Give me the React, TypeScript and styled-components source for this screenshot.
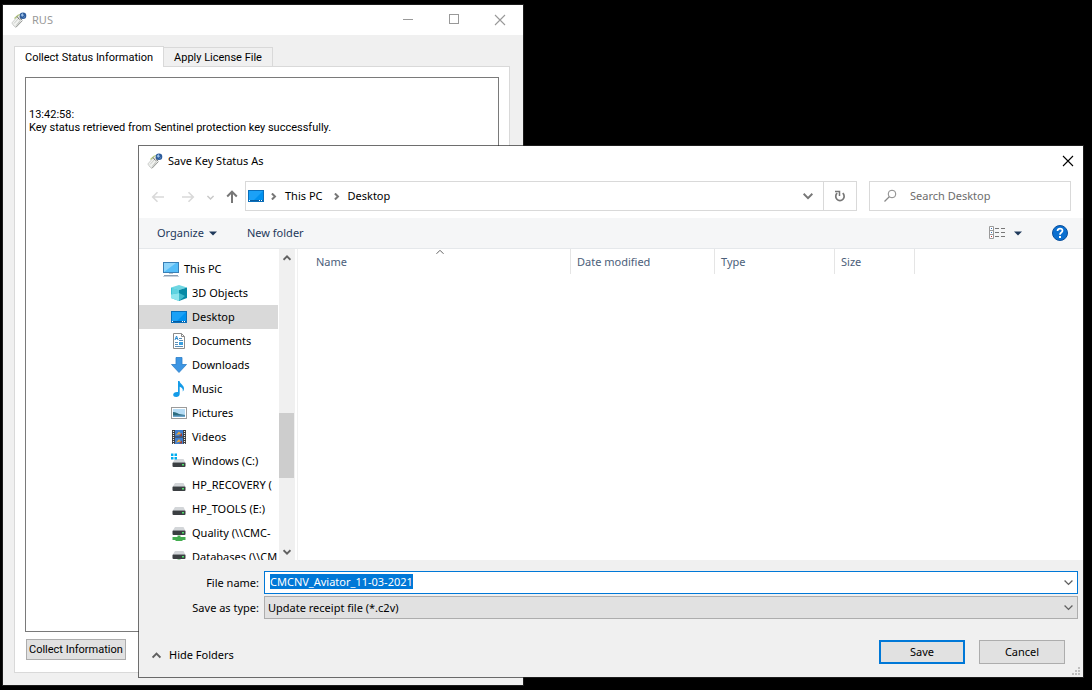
import React, { useEffect, useRef } from "react";
import styled, { createGlobalStyle, css } from "styled-components";

const uiFont = '"Noto Sans", "Open Sans", sans-serif';
const classicFont = 'Roboto, "Liberation Sans", sans-serif';

const GlobalStyle = createGlobalStyle`
  * { box-sizing: border-box; }
  body { margin: 0; background: #000; font-family: ${uiFont}; font-size: 11px; line-height: 16px; color: #000; }
  button, input, select, textarea { font: inherit; color: inherit; margin: 0; border-radius: 0; }
  svg { display: block; flex: none; }
`;

const Desktop = styled.main`
  position: relative;
  min-height: 100vh;
  background: #000;
  overflow: hidden;
`;

const frame = css`
  position: absolute;
  display: flex;
  flex-direction: column;
  border: 1px solid rgba(41, 41, 41, 0.68);
  background-clip: padding-box;
`;

const ToolWindow = styled.section`
  ${frame}
  left: 2px;
  top: 4px;
  bottom: 4px;
  width: 522px;
  background-color: #f0f0f0;
  font-family: ${classicFont};
`;

const DialogWindow = styled.section`
  ${frame}
  left: 138px;
  right: 8px;
  top: 145px;
  bottom: 12px;
  background-color: #fff;
`;

const TitleBar = styled.header<{ $muted?: boolean }>`
  display: flex;
  align-items: center;
  height: 30px;
  flex: none;
  padding: 0 9px 0 8px;
  gap: 5px;
  background: #fff;
  color: ${(p) => (p.$muted ? "#999" : "#000")};
  font-family: ${uiFont};
`;

const Title = styled.h1`
  margin: 0;
  flex: 1;
  font-size: inherit;
  font-weight: 400;
`;

const PlainButton = styled.button`
  display: flex;
  align-items: center;
  gap: 5px;
  padding: 0;
  border: 0;
  background: none;
  white-space: nowrap;
`;

const CaptionButtons = styled.div`
  display: flex;
  gap: 34px;
  padding-right: 8px;
`;

const ToolBody = styled.div`
  flex: 1;
  display: flex;
  flex-direction: column;
  padding: 11px 13px 12px 11px;
`;

const TabStrip = styled.div`
  display: flex;
  align-items: flex-end;
`;

const Tab = styled.button<{ $active?: boolean }>`
  height: ${(p) => (p.$active ? 21 : 19)}px;
  padding: 1px 10px 0;
  border: 1px solid #d9d9d9;
  border-bottom: 0;
  background: ${(p) => (p.$active ? "#fff" : "#f0f0f0")};
  line-height: 18px;
  margin-bottom: ${(p) => (p.$active ? -1 : 0)}px;
  z-index: ${(p) => (p.$active ? 1 : 0)};
  white-space: nowrap;
  & + & { border-left: 0; }
`;

const TabPanel = styled.div`
  flex: 1;
  display: flex;
  flex-direction: column;
  align-items: flex-start;
  gap: 7px;
  padding: 10px 10px 12px;
  border: 1px solid #d9d9d9;
  background: #fff;
`;

const Log = styled.textarea`
  flex: 1;
  width: 100%;
  padding: 4px 3px;
  border: 1px solid #7a7a7a;
  background: #fff;
  resize: none;
  outline: 0;
  line-height: 13px;
`;

const CollectButton = styled.button`
  height: 21px;
  margin-left: 1px;
  padding: 0 2px;
  border: 1px solid #adadad;
  background: #e1e1e1;
  white-space: nowrap;
`;

const NavRow = styled.nav`
  display: flex;
  align-items: center;
  height: 42px;
  flex: none;
  padding: 0 12px;
`;

const NavButtons = styled.div`
  display: grid;
  grid-template-columns: 30px 26px 18px 20px;
  align-items: center;
  flex: none;
`;

const box = css`
  display: flex;
  align-items: center;
  height: 30px;
  margin-top: -2px;
  border: 1px solid #d9d9d9;
  background: #fff;
`;

const AddressBar = styled.div`
  ${box}
  flex: 1;
  padding-left: 2px;
`;

const Crumb = styled.button`
  padding: 0 4px 0 0;
  border: 0;
  background: none;
`;

const CrumbArrow = styled.span`
  display: flex;
  padding-left: 6px;
  width: 21px;
`;

const Spacer = styled.div`
  flex: 1;
`;

const RefreshButton = styled.button`
  display: flex;
  align-items: center;
  justify-content: center;
  width: 33px;
  height: 100%;
  margin-left: 10px;
  border: 0;
  border-left: 1px solid #d9d9d9;
  padding: 0;
  background: none;
`;

const SearchBox = styled.label`
  ${box}
  width: 202px;
  margin-left: 12px;
  padding: 0 13px;
  gap: 12px;
`;

const SearchInput = styled.input`
  flex: 1;
  min-width: 0;
  padding: 0;
  border: 0;
  outline: 0;
  background: none;
  &::placeholder { color: #6d6d6d; opacity: 1; }
`;

const CommandBar = styled.div`
  display: flex;
  align-items: center;
  height: 31px;
  flex: none;
  padding: 0 15px 0 18px;
  gap: 30px;
  border-bottom: 1px solid #e5e8eb;
  background: #f5f6f7;
  color: #1e395b;
`;

const Browser = styled.div`
  display: flex;
  flex: 1;
  min-height: 0;
`;

const Tree = styled.ul`
  width: 139px;
  flex: none;
  margin: 0;
  padding: 8px 0 0;
  list-style: none;
  overflow: hidden;
`;

const TreeItem = styled.li<{ $root?: boolean; $selected?: boolean }>`
  display: flex;
  align-items: center;
  height: 24px;
  gap: 5px;
  padding-left: ${(p) => (p.$root ? 24 : 32)}px;
  background: ${(p) => (p.$selected ? "#d9d9d9" : "none")};
  white-space: nowrap;
`;

const ScrollTrack = styled.div`
  display: flex;
  flex-direction: column;
  align-items: center;
  width: 16px;
  flex: none;
  margin-left: 1px;
  padding: 5px 0 4px;
  background: #f0f0f0;
`;

const ScrollThumb = styled.div`
  width: 100%;
  height: 65px;
  margin-bottom: 70px;
  border-right: 1px solid #f0f0f0;
  background: #cdcdcd;
`;

const FilePane = styled.div`
  position: relative;
  flex: 1;
  margin-left: 2px;
  border-left: 1px solid #f0f0f0;
`;

const FileTable = styled.table`
  border-collapse: separate;
  border-spacing: 0;
  table-layout: fixed;
  width: 616px;
`;

const ColumnHead = styled.th<{ $width: number; $first?: boolean }>`
  width: ${(p) => p.$width}px;
  height: 25px;
  padding: 0 0 0 ${(p) => (p.$first ? 18 : 6)}px;
  border-right: 1px solid #e5e5e5;
  color: #4c607a;
  font-weight: 400;
  text-align: left;
`;

const SortMark = styled.span`
  position: absolute;
  left: 138px;
  top: -1px;
`;

const Footer = styled.footer`
  display: flex;
  flex-direction: column;
  height: 117px;
  flex: none;
  padding: 11px 5px 0 12px;
  background: #f0f0f0;
`;

const Fields = styled.div`
  display: grid;
  grid-template-columns: 108px 1fr;
  column-gap: 5px;
  row-gap: 2px;
  align-items: center;
`;

const FieldLabel = styled.label`
  text-align: right;
  white-space: nowrap;
`;

const Combo = styled.div`
  display: grid;
  align-items: center;
  & > * { grid-area: 1 / 1; }
  & > svg { justify-self: end; margin-right: 5px; pointer-events: none; }
`;

const FileNameInput = styled.input`
  height: 23px;
  width: 100%;
  padding: 0 20px 2px 5px;
  border: 1px solid #0078d7;
  background: #fff;
  outline: 0;
  &::selection { background: #0078d7; color: #fff; }
`;

const TypeSelect = styled.select`
  height: 23px;
  width: 100%;
  padding: 0 20px 0 3px;
  border: 1px solid #adadad;
  background: #e1e1e1;
  appearance: none;
  outline: 0;
`;

const Actions = styled.div`
  display: flex;
  align-items: center;
  gap: 14px;
  margin-top: 21px;
  padding-right: 13px;
`;

const ActionButton = styled.button<{ $primary?: boolean }>`
  width: 86px;
  height: 24px;
  padding: 0;
  border: ${(p) => (p.$primary ? "2px solid #0078d7" : "1px solid #adadad")};
  background: #e1e1e1;
`;

const FoldersToggle = styled(PlainButton)`
  margin-top: 6px;
  padding-left: 1px;
  gap: 8px;
`;

const ResizeGrip = styled.span`
  position: absolute;
  right: 3px;
  bottom: 2px;
`;

const KeyIcon = () => (
  <svg width="16" height="16" viewBox="0 0 16 16">
    <path d="M.800 11 7.500 3.500 11 7 4.800 15.200 3 14Z" fill="#f1f2f0" stroke="#b9bbb8" strokeWidth=".7" />
    <path d="M3 11.500 8 6M5 13.500l5-6" stroke="#c6c9c4" strokeWidth=".9" />
    <path d="M3.500 6.500 7 3.200 10 2.200" stroke="#b3c67c" strokeWidth="1.200" fill="none" />
    <path d="M6 4.500 8.500 7.500M9 5l1.500 3" stroke="#6a6a6a" strokeWidth="1" />
    <path d="M5 15.300 11.500 8.500" stroke="#8c8f8b" strokeWidth=".9" />
    <circle cx="12" cy="3.800" r="3.300" fill="#2d5c9c" />
    <path d="M10 3 11.500 1.500 12.500 3.500 11 4.500ZM12.500 5.500l1.500-1" fill="#9fc3ea" stroke="#9fc3ea" strokeWidth=".5" />
  </svg>
);

const CloseIcon = ({ color }: { color: string }) => (
  <svg width="12" height="12" viewBox="0 0 12 12">
    <path d="M1 1 11 11M11 1 1 11" stroke={color} strokeWidth="1.100" />
  </svg>
);

const Chevron = ({ dir, size = 8, color = "#606060", weight = 2 }: { dir: "up" | "down" | "right"; size?: number; color?: string; weight?: number }) => {
  const turn = { down: 0, up: 180, right: -90 }[dir];
  return (
    <svg width={size} height={size} viewBox="0 0 8 8">
      <path d="M.500 2.200 4 5.700 7.500 2.200" fill="none" stroke={color} strokeWidth={(weight * 8) / size} transform={`rotate(${turn} 4 4)`} />
    </svg>
  );
};

const Arrow = ({ turn = 0, color = "#d9d9d9", weight = 1.6 }: { turn?: number; color?: string; weight?: number }) => (
  <svg width="14" height="14" viewBox="0 0 14 14">
    <path d="M13 7H2M6.500 2.200 1.700 7l4.800 4.800" fill="none" stroke={color} strokeWidth={weight} transform={`rotate(${turn} 7 7)`} />
  </svg>
);

const Caret = () => (
  <svg width="8" height="5" viewBox="0 0 8 5">
    <path d="M0 .500H8L4 4.500Z" fill="#1e395b" />
  </svg>
);

const DesktopIcon = () => (
  <svg width="16" height="16" viewBox="0 0 16 16">
    <rect x=".5" y="2.500" width="15" height="11" fill="#1ba1f7" stroke="#0a6fbb" />
    <path d="M15 3v9L6 12Z" fill="#0091ef" />
    <path d="M1 12.500h14" stroke="#075c9f" />
    <path d="M1 12.500h1M11 12.500h1M13 12.500h1" stroke="#fff" />
  </svg>
);

const ComputerIcon = () => (
  <svg width="16" height="16" viewBox="0 0 16 16">
    <rect x=".5" y="1.500" width="15" height="10" fill="#55bdf8" stroke="#397fb5" />
    <path d="M1 11 13 2H1Z" fill="#8ed5fb" />
    <path d="M6 12h4v1H6Z" fill="#b9c4cd" />
    <path d="M1 14.500h14" stroke="#8d9fb3" />
    <path d="M0 15.500h16" stroke="#c7d0da" />
  </svg>
);

const CubeIcon = () => (
  <svg width="16" height="16" viewBox="0 0 16 16">
    <path d="M8 0 16 2.500 8 5 0 2.500Z" fill="#6fd6e2" />
    <path d="M0 2.500 8 5V16L0 13Z" fill="#38c2d4" />
    <path d="M16 2.500 8 5V16L16 13Z" fill="#078aa5" />
    <path d="M0 9.500 8 8v8L0 13Z" fill="#8de5ed" />
    <path d="M8 8 14 11 8 16Z" fill="#3fb9cb" />
    <path d="M8 5V8L1 9.300V3Z" fill="#5fd3e0" />
  </svg>
);

const DocumentIcon = () => (
  <svg width="16" height="16" viewBox="0 0 16 16">
    <path d="M2.500.500H10.500L13.500 3.500V15.500H2.500Z" fill="#fff" stroke="#8b8b8b" />
    <path d="M10.500.500V3.500H13.500" fill="none" stroke="#8b8b8b" />
    <path d="m4 7 1.500-4L7 7M4.500 5.500h2" stroke="#2b8ad0" fill="none" />
    <path d="M8 5.500h3M8 7.500h4M4 13.500h8M4 9.500h3M4 11.500h3" stroke="#5a8fb8" />
    <rect x="8" y="9" width="4" height="3" fill="#3aa0e0" />
  </svg>
);

const DownloadIcon = () => (
  <svg width="16" height="16" viewBox="0 0 16 16">
    <path d="M5 .500h6v7h4.500L8 15.500.500 7.500H5Z" fill="#3c95e3" stroke="#2b7dc8" strokeWidth=".8" />
  </svg>
);

const MusicIcon = () => (
  <svg width="16" height="16" viewBox="0 0 16 16">
    <path d="M7 0h1.500C9 3 13 4 13 7.500c0 1.500-.7 2.500-1.300 3C12.300 8 11 6.500 8.700 5.700V13c0 1.800-1.700 3-3.500 3S2.200 15 2.200 13.700C2.200 12 4 10.700 7 11Z" fill="#149be8" />
  </svg>
);

const PictureIcon = () => (
  <svg width="16" height="16" viewBox="0 0 16 16">
    <rect x=".5" y="2.500" width="15" height="11" fill="#fff" stroke="#9b9b9b" />
    <rect x="2" y="4" width="12" height="8" fill="#b6dcf5" />
    <path d="M2 7c3 0 4 1 6 2l6 1v2H2Z" fill="#2e6d80" />
    <path d="M2 10.500h12V12H2Z" fill="#6ca5cc" />
  </svg>
);

const VideoIcon = () => (
  <svg width="16" height="16" viewBox="0 0 16 16">
    <rect x="1" y="1" width="14" height="14" fill="#3c3c3c" />
    <rect x="4" y="1" width="8" height="6.500" fill="#3f7fd0" />
    <rect x="4" y="8.500" width="8" height="6.500" fill="#3f7fd0" />
    <path d="M2.500 2v13M13.500 2v13" stroke="#eee" strokeWidth="1.200" strokeDasharray="1 1" />
    <path d="M5 6 8 2.500 10 5ZM5 13.500l3-3.500 2 2.500Z" fill="#e8a63c" />
    <path d="m8 7 3-3v3ZM8 14.500l3-3v3Z" fill="#a63d2c" />
  </svg>
);

const DriveIcon = ({ kind }: { kind?: "system" | "network" }) => {
  const network = kind === "network";
  return (
    <svg width="16" height="16" viewBox="0 0 16 16">
      <g transform={network ? "translate(0 -4)" : undefined}>
        <path d="M4 6h8.500l2 4h-13Z" fill="#d3d6d9" />
        <rect x="1.500" y="9.500" width="13" height="4.500" rx="1" fill="#3b3f42" />
        <path d="M2 9.500h12" stroke="#8e9295" />
        <rect x="11" y="11" width="2" height="1.500" fill="#4ee06a" />
      </g>
      {kind === "system" && <path d="M0 .500h2.500V3H0ZM3.500.500H6V3H3.500ZM0 4h2.500v2.500H0ZM3.500 4H6v2.500H3.500Z" fill="#00adef" />}
      {network && <path d="M6.500 10.500h3V12h5v3h-3v1h-7v-1h-3v-3h5Z" fill="#44ad50" />}
    </svg>
  );
};

const places = [
  { name: "3D Objects", icon: <CubeIcon /> },
  { name: "Desktop", icon: <DesktopIcon />, selected: true },
  { name: "Documents", icon: <DocumentIcon /> },
  { name: "Downloads", icon: <DownloadIcon /> },
  { name: "Music", icon: <MusicIcon /> },
  { name: "Pictures", icon: <PictureIcon /> },
  { name: "Videos", icon: <VideoIcon /> },
  { name: "Windows (C:)", icon: <DriveIcon kind="system" /> },
  { name: "HP_RECOVERY (", icon: <DriveIcon /> },
  { name: "HP_TOOLS (E:)", icon: <DriveIcon /> },
  { name: "Quality (\\\\CMC-", icon: <DriveIcon kind="network" /> },
  { name: "Databases (\\\\CM", icon: <DriveIcon kind="network" /> },
];

const columns = [
  { name: "Name", width: 273 },
  { name: "Date modified", width: 144 },
  { name: "Type", width: 120 },
  { name: "Size", width: 80 },
];

const logText = "\n\n13:42:58:\nKey status retrieved from Sentinel protection key successfully.";

function StatusTool() {
  return (
    <ToolWindow aria-label="RUS">
      <TitleBar $muted>
        <KeyIcon />
        <Title>RUS</Title>
        <CaptionButtons>
          <PlainButton aria-label="Minimize">
            <svg width="12" height="12" viewBox="0 0 12 12"><path d="M1 5.500h10" stroke="#999" /></svg>
          </PlainButton>
          <PlainButton aria-label="Maximize">
            <svg width="12" height="12" viewBox="0 0 12 12"><rect x="1.500" y=".5" width="9" height="9" fill="none" stroke="#999" /></svg>
          </PlainButton>
          <PlainButton aria-label="Close"><CloseIcon color="#999" /></PlainButton>
        </CaptionButtons>
      </TitleBar>
      <ToolBody>
        <TabStrip role="tablist">
          <Tab role="tab" aria-selected $active>Collect Status Information</Tab>
          <Tab role="tab" aria-selected={false}>Apply License File</Tab>
        </TabStrip>
        <TabPanel role="tabpanel">
          <Log aria-label="Status log" readOnly value={logText} />
          <CollectButton>Collect Information</CollectButton>
        </TabPanel>
      </ToolBody>
    </ToolWindow>
  );
}

function SaveDialog() {
  const nameRef = useRef<HTMLInputElement>(null);
  useEffect(() => {
    nameRef.current?.focus();
    nameRef.current?.select();
  }, []);

  return (
    <DialogWindow role="dialog" aria-label="Save Key Status As">
      <TitleBar>
        <KeyIcon />
        <Title>Save Key Status As</Title>
        <PlainButton aria-label="Close"><CloseIcon color="#000" /></PlainButton>
      </TitleBar>
      <NavRow>
        <NavButtons>
          <PlainButton aria-label="Back"><Arrow /></PlainButton>
          <PlainButton aria-label="Forward"><Arrow turn={180} /></PlainButton>
          <PlainButton aria-label="Recent locations"><Chevron dir="down" color="#c8c8c8" weight={1.5} size={7} /></PlainButton>
          <PlainButton aria-label="Up"><Arrow turn={90} color="#777" weight={2} /></PlainButton>
        </NavButtons>
        <AddressBar>
          <DesktopIcon />
          <CrumbArrow><Chevron dir="right" size={7} color="#777" /></CrumbArrow>
          <Crumb>This PC</Crumb>
          <CrumbArrow><Chevron dir="right" size={7} color="#777" /></CrumbArrow>
          <Crumb>Desktop</Crumb>
          <Spacer />
          <PlainButton aria-label="Previous locations"><Chevron dir="down" size={10} color="#777" /></PlainButton>
          <RefreshButton aria-label="Refresh">
            <svg width="12" height="12" viewBox="0 0 12 12">
              <path d="M8.700 3.200A4.200 4.200 0 1 1 3.200 3.200" fill="none" stroke="#777" strokeWidth="1.700" />
              <path d="M1 1.500H5.500V6" fill="none" stroke="#777" strokeWidth="1.500" />
            </svg>
          </RefreshButton>
        </AddressBar>
        <SearchBox>
          <svg width="15" height="14" viewBox="0 0 15 14">
            <circle cx="9" cy="5" r="3.800" fill="none" stroke="#888" />
            <path d="M6.300 7.800 1.500 12.500" stroke="#888" strokeWidth="1.200" />
          </svg>
          <SearchInput aria-label="Search Desktop" placeholder="Search Desktop" />
        </SearchBox>
      </NavRow>
      <CommandBar>
        <PlainButton>Organize <Caret /></PlainButton>
        <PlainButton>New folder</PlainButton>
        <Spacer />
        <PlainButton aria-label="Change view">
          <svg width="20" height="14" viewBox="0 0 20 14">
            <path d="M.500.500h4v12h-4ZM.500 4.500h4M.500 8.500h4" fill="#fff" stroke="#9a9a9a" />
            <path d="M2 2.500h1M2 6.500h1" stroke="#3b76b8" />
            <path d="M2 10.500h1" stroke="#c03030" />
            <path d="M6 2.500h4M12 2.500h4M6 6.500h4M12 6.500h4M6 10.500h4M12 10.500h4" stroke="#777" />
          </svg>
          <Caret />
        </PlainButton>
        <PlainButton aria-label="Help">
          <svg width="16" height="16" viewBox="0 0 16 16">
            <circle cx="8" cy="8" r="7.500" fill="#0a6fd0" stroke="#0a4f9c" />
            <path d="M5.500 6C5.500 2.800 10.500 3 10.500 5.800 10.500 7.600 8 7.500 8 9.700" fill="none" stroke="#fff" strokeWidth="1.700" />
            <path d="M7 11h2v2H7Z" fill="#fff" />
          </svg>
        </PlainButton>
      </CommandBar>
      <Browser>
        <Tree>
          <TreeItem $root><ComputerIcon />This PC</TreeItem>
          {places.map((p) => (
            <TreeItem key={p.name} $selected={p.selected}>{p.icon}{p.name}</TreeItem>
          ))}
        </Tree>
        <ScrollTrack>
          <Chevron dir="up" />
          <Spacer />
          <ScrollThumb />
          <Chevron dir="down" />
        </ScrollTrack>
        <FilePane>
          <SortMark><Chevron dir="up" weight={1} /></SortMark>
          <FileTable>
            <thead>
              <tr>
                {columns.map((c, i) => (
                  <ColumnHead key={c.name} scope="col" $width={c.width} $first={i === 0}>{c.name}</ColumnHead>
                ))}
              </tr>
            </thead>
          </FileTable>
        </FilePane>
      </Browser>
      <Footer>
        <Fields>
          <FieldLabel htmlFor="file-name">File name:</FieldLabel>
          <Combo>
            <FileNameInput id="file-name" ref={nameRef} defaultValue="CMCNV_Aviator_11-03-2021" />
            <Chevron dir="down" weight={1.3} size={9} />
          </Combo>
          <FieldLabel htmlFor="file-type">Save as type:</FieldLabel>
          <Combo>
            <TypeSelect id="file-type"><option>Update receipt file (*.c2v)</option></TypeSelect>
            <Chevron dir="down" weight={1.3} size={9} />
          </Combo>
        </Fields>
        <Actions>
          <FoldersToggle><Chevron dir="up" size={9} />Hide Folders</FoldersToggle>
          <Spacer />
          <ActionButton $primary>Save</ActionButton>
          <ActionButton>Cancel</ActionButton>
        </Actions>
      </Footer>
      <ResizeGrip>
        <svg width="8" height="8" viewBox="0 0 8 8">
          <path d="M6 0h2v2H6ZM3 3h2v2H3ZM6 3h2v2H6ZM0 6h2v2H0ZM3 6h2v2H3ZM6 6h2v2H6Z" fill="#bfbfbf" />
        </svg>
      </ResizeGrip>
    </DialogWindow>
  );
}

export default function App() {
  return (
    <>
      <GlobalStyle />
      <Desktop>
        <StatusTool />
        <SaveDialog />
      </Desktop>
    </>
  );
}
